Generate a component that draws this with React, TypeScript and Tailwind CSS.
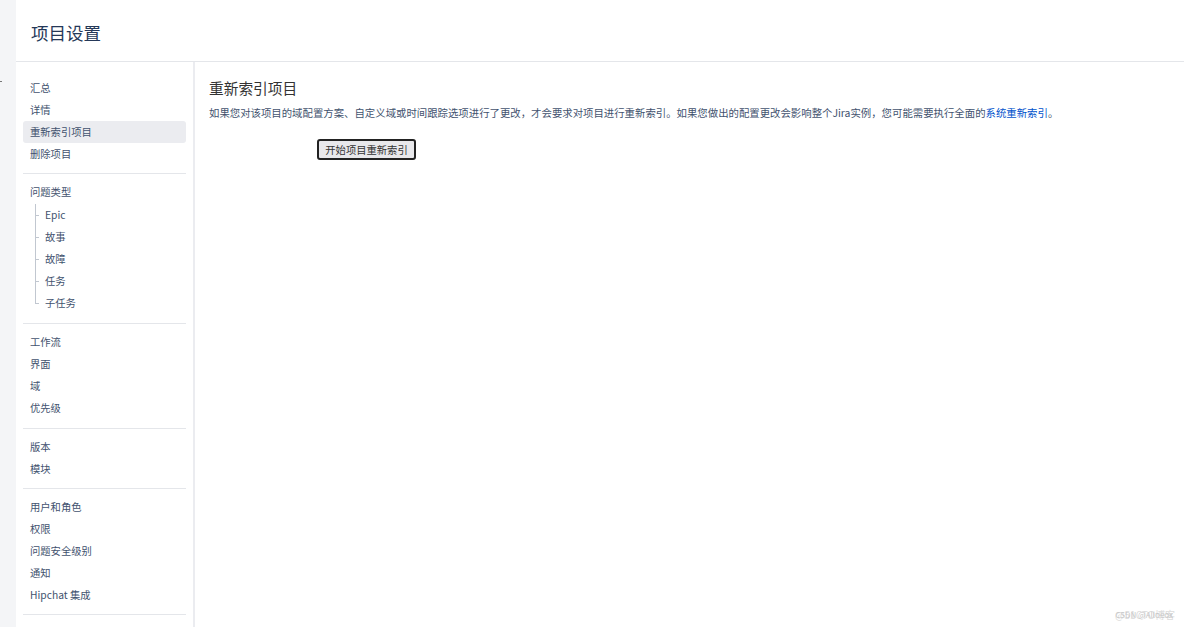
import React from 'react';

type NavItem = { label: string; active?: boolean; children?: string[] };

const groups: NavItem[][] = [
  [{ label: '汇总' }, { label: '详情' }, { label: '重新索引项目', active: true }, { label: '删除项目' }],
  [{ label: '问题类型', children: ['Epic', '故事', '故障', '任务', '子任务'] }],
  [{ label: '工作流' }, { label: '界面' }, { label: '域' }, { label: '优先级' }],
  [{ label: '版本' }, { label: '模块' }],
  [{ label: '用户和角色' }, { label: '权限' }, { label: '问题安全级别' }, { label: '通知' }, { label: 'Hipchat 集成' }],
];

function SubItem({ label, last }: { label: string; last: boolean }) {
  return (
    <div className="flex h-[22px] items-stretch ml-[12px]">
      {/* tree connector: ├ for middle rows, └ for the last */}
      <div className="flex w-[4px] flex-col">
        <div className="flex-1 border-l border-b border-[#c1c7d0]" />
        <div className={`flex-1 ${last ? '' : 'border-l border-[#c1c7d0]'}`} />
      </div>
      <a className="ml-[6px] flex items-center text-[#42526e]">{label}</a>
    </div>
  );
}

function Sidebar() {
  return (
    <nav className="w-[179px] shrink-0 border-r-2 border-[#ebecf0] pt-[8px] text-[10.3px] leading-[22px]">
      {groups.map((group, gi) => (
        <div
          key={gi}
          className={`mx-[7px] border-b border-[#e4e6ea] pt-[7px] ${gi === 2 ? 'pb-[9px]' : 'pb-[8px]'}`}
        >
          {group.map((item) => (
            <div key={item.label}>
              <a
                className={`block h-[22px] rounded-[3px] px-[7px] text-[#42526e] ${
                  item.active ? 'bg-[#ebecf0]' : ''
                }`}
              >
                {item.label}
              </a>
              {item.children && (
                <div className="py-[1px]">
                  {item.children.map((c, i) => (
                    <SubItem key={c} label={c} last={i === item.children!.length - 1} />
                  ))}
                </div>
              )}
            </div>
          ))}
        </div>
      ))}
    </nav>
  );
}

function ReindexPanel() {
  return (
    <section className="flex-1 pl-[14px] pt-[16px] text-[#172b4d]">
      <h2 className="text-[14.7px] leading-[20px] text-[#333]">重新索引项目</h2>
      <p className="mt-[7px] text-[10.4px] leading-[16px] text-[#42526e]">
        如果您对该项目的域配置方案、自定义域或时间跟踪选项进行了更改，才会要求对项目进行重新索引。如果您做出的配置更改会影响整个Jira实例，您可能需要执行全面的
        <a className="text-[#0052cc]">系统重新索引</a>。
      </p>
      <button className="mt-[18px] ml-[108px] h-[21px] w-[99px] rounded-[3px] border-2 border-[#222] bg-[#e8e8eb] text-[10.3px] leading-[17px] text-[#333]">
        开始项目重新索引
      </button>
    </section>
  );
}

export default function App() {
  return (
    <div className="relative flex h-[627px] w-[1184px] overflow-hidden bg-white font-['Noto_Sans_CJK_SC','Noto_Sans',sans-serif]">
      <div className="w-[16px] shrink-0 bg-[#f4f5f7] pt-[81px]">
        <div className="h-[1px] w-[2px] bg-[#777]" />
      </div>
      <div className="flex flex-1 flex-col">
        <header className="flex h-[62px] shrink-0 items-center border-b border-[#e4e6ea] pl-[15px] pt-[4px]">
          <h1 className="text-[17.5px] leading-[24px] text-[#253858]">项目设置</h1>
        </header>
        <div className="flex flex-1">
          <Sidebar />
          <ReindexPanel />
        </div>
      </div>
      <div className="absolute right-[9px] bottom-[6px] text-[10px] leading-[12px] text-[#dcdcdc]">
        @51CTO博客
      </div>
      <div className="absolute right-[11px] bottom-[7px] text-[8px] leading-[10px] text-[#c8c8c8]">
        CSDN @Alloeox
      </div>
    </div>
  );
}
